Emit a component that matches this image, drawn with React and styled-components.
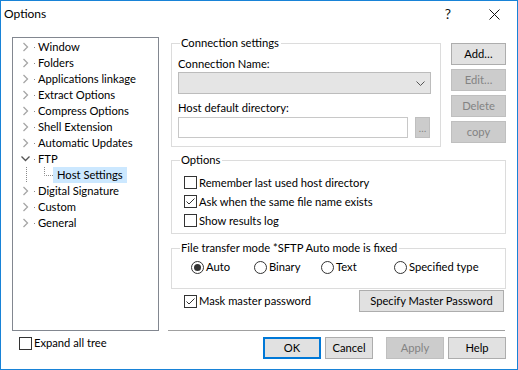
import React from 'react';
import styled, { createGlobalStyle } from 'styled-components';

const Global = createGlobalStyle`
  html, body { margin: 0; padding: 0; background: #fff; }
  body { font-family: Lato, "Noto Sans", sans-serif; font-size: 11.2px; color: #000; }
  * { box-sizing: border-box; }
`;

const Window = styled.div`
  width: 518px;
  height: 370px;
  border: 1px solid #1883d7;
  background: #fff;
  display: flex;
  flex-direction: column;
  line-height: 16px;
`;

const TitleBar = styled.div`
  height: 36px;
  flex-shrink: 0;
  display: flex;
  align-items: flex-start;
`;

const Title = styled.div`
  padding: 5px 0 0 3px;
  font-size: 12px;
`;

const Caption = styled.div`
  margin-left: auto;
  display: flex;
`;

const CaptionButton = styled.div`
  width: 46px;
  height: 26px;
  display: flex;
  align-items: center;
  justify-content: center;
  font-size: 14px;
  color: #111;
`;

const Body = styled.div`
  display: grid;
  grid-template-columns: 147px 338px;
  column-gap: 9px;
  padding-left: 11px;
`;

const LeftCol = styled.div`
  display: flex;
  flex-direction: column;
`;

const Tree = styled.div`
  height: 294px;
  border: 1px solid #828790;
  padding-top: 1px;
`;

const TreeRow = styled.div`
  height: 16px;
  display: flex;
  align-items: center;
  padding-left: 7px;
`;

const Expander = styled.span`
  width: 12px;
  height: 16px;
  display: flex;
  flex-shrink: 0;
`;

const Stub = styled.span`
  width: 4px;
  height: 16px;
  position: relative;
  flex-shrink: 0;
  &::after {
    content: '';
    position: absolute;
    left: 2px;
    top: 8px;
    width: 1px;
    height: 1px;
    background: #8a8a8a;
  }
`;

const TreeLabel = styled.span`
  padding: 0 4px 0 ${p => (p.$child ? 4 : 2)}px;
  height: 16px;
  white-space: nowrap;
  background: ${p => (p.$selected ? '#cce8ff' : 'transparent')};
`;

const CheckRow = styled.label`
  display: flex;
  align-items: center;
  height: ${p => p.$h || 16}px;
  gap: ${p => p.$gap ?? 2}px;
  white-space: nowrap;
`;

const Box = styled.span`
  width: 13px;
  height: 13px;
  border: 1px solid #333;
  background: #fff;
  display: flex;
  flex-shrink: 0;
`;

const ExpandRow = styled(CheckRow)`
  margin-top: 4px;
  margin-left: 7px;
`;

const RightCol = styled.div`
  display: flex;
  flex-direction: column;
`;

const TopRow = styled.div`
  display: flex;
  gap: 10px;
  margin: 6px 0 0 3px;
`;

const Group = styled.div`
  position: relative;
  border: 1px solid #dcdcdc;
  width: ${p => p.$w}px;
  height: ${p => p.$h}px;
  margin-left: ${p => p.$ml || 0}px;
  margin-top: ${p => p.$mt || 0}px;
  padding: ${p => p.$pad};
  flex-shrink: 0;
`;

const Legend = styled.span`
  position: absolute;
  top: -9px;
  left: 8px;
  padding: 0 2px 0 1px;
  background: #fff;
  white-space: nowrap;
`;

const FieldLabel = styled.div`
  margin-top: ${p => p.$mt || 0}px;
  white-space: nowrap;
`;

const Combo = styled.div`
  width: 253px;
  height: 22px;
  background: #e5e5e5;
  border: 1px solid #bcbcbc;
  display: flex;
  align-items: center;
  justify-content: flex-end;
  padding-right: 5px;
`;

const InputRow = styled.div`
  display: flex;
  gap: 7px;
  margin-top: 1px;
`;

const TextInput = styled.div`
  width: 230px;
  height: 21px;
  border: 1px solid #c8c8c8;
  background: #fff;
`;

const Ellipsis = styled.div`
  width: 15px;
  height: 21px;
  background: #cccccc;
  border: 1px solid #bfbfbf;
  color: #838383;
  font-size: 10px;
  display: flex;
  align-items: center;
  justify-content: center;
`;

const ButtonStack = styled.div`
  display: flex;
  flex-direction: column;
  gap: 4px;
`;

const variants = {
  normal: { bg: '#e1e1e1', border: '1px solid #adadad', color: '#000' },
  disabled: { bg: '#cccccc', border: '1px solid #bfbfbf', color: '#838383' },
  primary: { bg: '#e1e1e1', border: '2px solid #0078d7', color: '#000' },
};

const Button = styled.div`
  width: ${p => p.$w}px;
  height: 22px;
  flex-shrink: 0;
  display: flex;
  align-items: center;
  justify-content: center;
  background: ${p => variants[p.$v || 'normal'].bg};
  border: ${p => variants[p.$v || 'normal'].border};
  color: ${p => variants[p.$v || 'normal'].color};
  white-space: nowrap;
`;

const RadioRow = styled.div`
  display: flex;
  height: 16px;
`;

const RadioItem = styled.label`
  width: ${p => p.$w}px;
  display: flex;
  align-items: center;
  gap: 2px;
  white-space: nowrap;
`;

const Radio = styled.span`
  width: 13px;
  height: 13px;
  border-radius: 50%;
  border: 1px solid #333;
  display: flex;
  align-items: center;
  justify-content: center;
  flex-shrink: 0;
  &::after {
    content: '';
    width: 7px;
    height: 7px;
    border-radius: 50%;
    background: #333;
    display: ${p => (p.$on ? 'block' : 'none')};
  }
`;

const MaskRow = styled.div`
  margin-top: 1px;
  height: 22px;
  display: flex;
  align-items: center;
  justify-content: space-between;
  padding: 0 2px 0 16px;
`;

const Separator = styled.div`
  margin-top: 18px;
  height: 1px;
  width: 337px;
  background: #a0a0a0;
`;

const ButtonRow = styled.div`
  margin-top: 6px;
  display: flex;
  justify-content: flex-end;
`;

const Gap = styled.span`
  width: ${p => p.$w}px;
  flex-shrink: 0;
`;

const Check = ({ on }) => (
  <Box>
    {on && (
      <svg width="11" height="11" viewBox="0 0 11 11">
        <path d="M1.5 5.5 L4 8 L9.5 2.5" fill="none" stroke="#333" strokeWidth="1" />
      </svg>
    )}
  </Box>
);

const ChevronRight = () => (
  <svg width="12" height="16" viewBox="0 0 12 16">
    <path d="M3.5 4 L7.5 8 L3.5 12" fill="none" stroke="#a6a6a6" strokeWidth="1.3" />
  </svg>
);

const ChevronDown = () => (
  <svg width="12" height="16" viewBox="0 0 12 16">
    <path d="M1.5 5.5 L5.5 9.5 L9.5 5.5" fill="none" stroke="#555" strokeWidth="1.3" />
  </svg>
);

const TreeLine = () => (
  <svg width="12" height="16" viewBox="0 0 12 16">
    <path d="M6.5 0 V16" stroke="#8a8a8a" strokeWidth="1" strokeDasharray="1 1" />
  </svg>
);

const ChildConnector = () => (
  <svg width="21" height="16" viewBox="0 0 21 16">
    <path d="M12.5 0 V8.5 H21" fill="none" stroke="#8a8a8a" strokeWidth="1" strokeDasharray="1 1" />
  </svg>
);

const topItems = ['Window', 'Folders', 'Applications linkage', 'Extract Options', 'Compress Options', 'Shell Extension', 'Automatic Updates'];
const bottomItems = ['Digital Signature', 'Custom', 'General'];

const TreeItem = ({ label }) => (
  <TreeRow>
    <Expander><ChevronRight /></Expander>
    <Stub />
    <TreeLabel>{label}</TreeLabel>
  </TreeRow>
);

export default function App() {
  return (
    <>
      <Global />
      <Window>
        <TitleBar>
          <Title>Options</Title>
          <Caption>
            <CaptionButton>?</CaptionButton>
            <CaptionButton>
              <svg width="11" height="11" viewBox="0 0 11 11">
                <path d="M0.5 0.5 L10.5 10.5 M10.5 0.5 L0.5 10.5" stroke="#111" strokeWidth="1" />
              </svg>
            </CaptionButton>
          </Caption>
        </TitleBar>
        <Body>
          <LeftCol>
            <Tree>
              {topItems.map(t => <TreeItem key={t} label={t} />)}
              <TreeRow>
                <Expander><ChevronDown /></Expander>
                <Stub />
                <TreeLabel>FTP</TreeLabel>
              </TreeRow>
              <TreeRow>
                <Expander><TreeLine /></Expander>
                <ChildConnector />
                <TreeLabel $child $selected>Host Settings</TreeLabel>
              </TreeRow>
              {bottomItems.map(t => <TreeItem key={t} label={t} />)}
            </Tree>
            <ExpandRow>
              <Check />
              Expand all tree
            </ExpandRow>
          </LeftCol>
          <RightCol>
            <TopRow>
              <Group $w={270} $h={104} $pad="12px 0 0 6px">
                <Legend>Connection settings</Legend>
                <FieldLabel>Connection Name:</FieldLabel>
                <Combo>
                  <svg width="9" height="5" viewBox="0 0 9 5">
                    <path d="M0.5 0.5 L4.5 4.5 L8.5 0.5" fill="none" stroke="#555" strokeWidth="1" />
                  </svg>
                </Combo>
                <FieldLabel $mt={6}>Host default directory:</FieldLabel>
                <InputRow>
                  <TextInput />
                  <Ellipsis>…</Ellipsis>
                </InputRow>
              </Group>
              <ButtonStack>
                <Button $w={55}>Add…</Button>
                <Button $w={55} $v="disabled">Edit…</Button>
                <Button $w={55} $v="disabled">Delete</Button>
                <Button $w={55} $v="disabled">copy</Button>
              </ButtonStack>
            </TopRow>
            <Group $w={335} $h={74} $ml={3} $mt={13} $pad="12px 0 0 12px">
              <Legend>Options</Legend>
              <CheckRow $h={19}><Check />Remember last used host directory</CheckRow>
              <CheckRow $h={19}><Check on />Ask when the same file name exists</CheckRow>
              <CheckRow $h={19}><Check />Show results log</CheckRow>
            </Group>
            <Group $w={335} $h={41} $ml={3} $mt={14} $pad="10px 0 0 19px">
              <Legend>File transfer mode *SFTP Auto mode is fixed</Legend>
              <RadioRow>
                <RadioItem $w={63}><Radio $on />Auto</RadioItem>
                <RadioItem $w={67}><Radio />Binary</RadioItem>
                <RadioItem $w={73}><Radio />Text</RadioItem>
                <RadioItem $w={100}><Radio />Specified type</RadioItem>
              </RadioRow>
            </Group>
            <MaskRow>
              <CheckRow><Check on />Mask master password</CheckRow>
              <Button $w={145}>Specify Master Password</Button>
            </MaskRow>
            <Separator />
            <ButtonRow>
              <Button $w={58} $v="primary">OK</Button>
              <Gap $w={4} />
              <Button $w={48}>Cancel</Button>
              <Gap $w={13} />
              <Button $w={58} $v="disabled">Apply</Button>
              <Gap $w={4} />
              <Button $w={58}>Help</Button>
            </ButtonRow>
          </RightCol>
        </Body>
      </Window>
    </>
  );
}
